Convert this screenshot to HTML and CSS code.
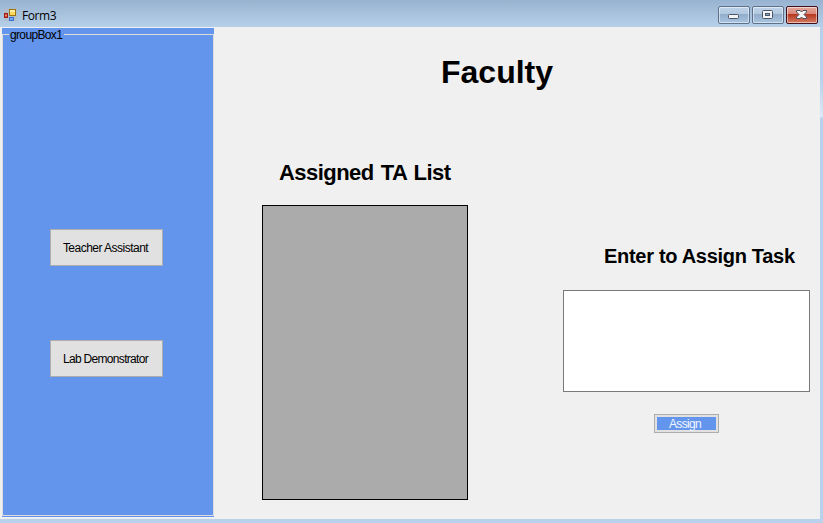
FILE: index.html
```html
<!DOCTYPE html>
<html lang="en">
<head>
<meta charset="utf-8">
<title>Form3</title>
<link rel="stylesheet" href="styles.css">
</head>
<body>
<div class="window">
  <header class="titlebar">
    <svg class="app-icon" width="14" height="14" viewBox="0 0 14 14">
      <rect x="0" y="0" width="13" height="13" fill="#b7b9bd" opacity=".55"/>
      <rect x="5.5" y="1.500" width="6" height="6" fill="#ffd75c" stroke="#9c7410"/>
      <path d="M6 2h5v2H6z" fill="#fff0a6"/>
      <rect x="0.5" y="5.500" width="3" height="4" fill="#df4b38" stroke="#9b1d16"/>
      <rect x="1.500" y="7" width="1" height="1" fill="#ffd1c4"/>
      <rect x="5.500" y="9.500" width="4" height="3" fill="#74a5f4" stroke="#3d6fc9"/>
    </svg>
    <span class="title">Form3</span>
    <div class="controls">
      <button class="control" aria-label="Minimize">
        <svg width="32" height="18" viewBox="0 0 32 18"><rect x="10.5" y="8.5" width="10" height="4" rx="1" fill="#f4f4f4" stroke="#4b5568"/></svg>
      </button>
      <button class="control" aria-label="Maximize">
        <svg width="32" height="18" viewBox="0 0 32 18"><rect x="10.5" y="4.5" width="10" height="8" rx="1" fill="#f4f4f4" stroke="#4b5568"/><rect x="13.5" y="7.5" width="4" height="2" fill="#8eadcd" stroke="#4b5568"/></svg>
      </button>
      <button class="control close" aria-label="Close">
        <svg width="32" height="18" viewBox="0 0 32 18"><path d="M10.500 4.500h3.500l1.500 1.500 1.500-1.500h3.500v1.500l-2.500 2.500 2.500 2.500v1.500h-3.500l-1.500-1.500-1.500 1.500h-3.500v-1.500l2.500-2.500-2.500-2.500z" fill="#f5f5f5" stroke="#4b5060"/></svg>
      </button>
    </div>
  </header>
  <main class="client">
    <section class="sidebar">
      <div class="group">
        <span class="legend">groupBox1</span>
        <button class="nav-button"><span class="teacher">Teacher Assistant</span></button>
        <button class="nav-button"><span class="lab">Lab Demonstrator</span></button>
      </div>
    </section>
    <section class="content">
      <h1>Faculty</h1>
      <div class="columns">
        <div class="list-column">
          <h2>Assigned TA List</h2>
          <div class="data-grid"></div>
        </div>
        <div class="task-column">
          <h3>Enter to Assign Task</h3>
          <div class="task-input"></div>
          <button class="assign">Assign</button>
        </div>
      </div>
    </section>
  </main>
</div>
</body>
</html>
```

FILE: styles.css
```css
* { box-sizing: border-box; }
body { margin: 0; font-family: "Liberation Sans", Arial, sans-serif; color: #000; }
button { padding: 0; margin: 0; font: inherit; color: inherit; border-radius: 0; }
h1, h2, h3 { margin: 0; font-weight: bold; white-space: nowrap; }

.window {
  width: 823px;
  height: 523px;
  display: grid;
  grid-template-rows: 27px 492px;
  background: linear-gradient(#98b3d0 0, #b7d0e9 27px, #b9d1ea 80px, #dce9f8 117px, #b9d1ea 118px);
}

.titlebar {
  display: flex;
  align-items: flex-start;
  padding-left: 4px;
  padding-right: 5px;
  background: linear-gradient(#98b3d0, #b7d0e9);
}
.app-icon { margin-top: 8px; }
.title {
  margin-left: 4px;
  margin-top: 7px;
  font: 12px/17px "Open Sans", sans-serif;
  letter-spacing: -0.45px;
}
.controls { display: flex; gap: 2px; margin-left: auto; margin-top: 6px; }
.control {
  width: 32px;
  height: 18px;
  border: 1px solid #5d718a;
  border-radius: 2px;
  background: linear-gradient(#bfd3e8 0, #b0c8df 45%, #91adca 46%, #a9c5e0 100%);
  box-shadow: inset 0 0 0 1px rgba(255, 255, 255, .5);
}
.control svg { display: block; margin: -1px; }
.control.close {
  border-color: #43101a;
  background: linear-gradient(#e5a99f 0, #d98475 45%, #b8371f 46%, #d27c63 100%);
}

.client { width: 820px; height: 492px; display: flex; background: #f0f0f0; }

.sidebar {
  width: 212px;
  height: 489px;
  margin: 1px 0 0 2px;
  padding: 6px 0 1px;
  background: #6495ed;
}
.group {
  position: relative;
  height: 482px;
  border: 1px solid #dcdcdc;
  display: flex;
  flex-direction: column;
  gap: 74px;
  padding: 194px 0 0 47px;
}
.legend {
  position: absolute;
  left: 6px;
  top: -7px;
  width: 55px;
  padding-left: 1px;
  background: #6495ed;
  font-size: 12px;
  line-height: 14px;
  letter-spacing: -0.65px;
}
.nav-button {
  width: 113px;
  height: 37px;
  padding-right: 2px;
  border: 1px solid #adadad;
  background: #e1e1e1;
  font-size: 12px;
  line-height: 14px;
  white-space: nowrap;
}
.teacher { letter-spacing: -0.52px; }
.lab { letter-spacing: -0.68px; }

.content { flex: 1; padding-top: 26px; }
h1 { margin-left: 227px; font-size: 32px; line-height: 38px; }
.columns { display: flex; }
.list-column { width: 206px; margin-left: 48px; padding-top: 69px; }
h2 {
  margin-left: 17px;
  font-size: 22px;
  line-height: 26px;
  letter-spacing: -0.55px;
  word-spacing: 1.5px;
}
.data-grid { height: 295px; margin-top: 19px; border: 1px solid #000; background: #ababab; }
.task-column { width: 247px; margin-left: 95px; padding-top: 153px; }
h3 {
  margin-left: 41px;
  font-size: 20px;
  line-height: 24px;
  letter-spacing: -0.3px;
}
.task-input { height: 102px; margin-top: 22px; border: 1px solid #7a7a7a; background: #fff; }
.assign {
  display: block;
  width: 65px;
  height: 19px;
  margin: 22px 0 0 91px;
  padding-right: 3px;
  border: 1px solid #adadad;
  background: #6495ed;
  box-shadow: inset 0 0 0 2px #e1e1e1;
  color: #f0f5ff;
  font-size: 12px;
  line-height: 14px;
  letter-spacing: -0.65px;
}
```
